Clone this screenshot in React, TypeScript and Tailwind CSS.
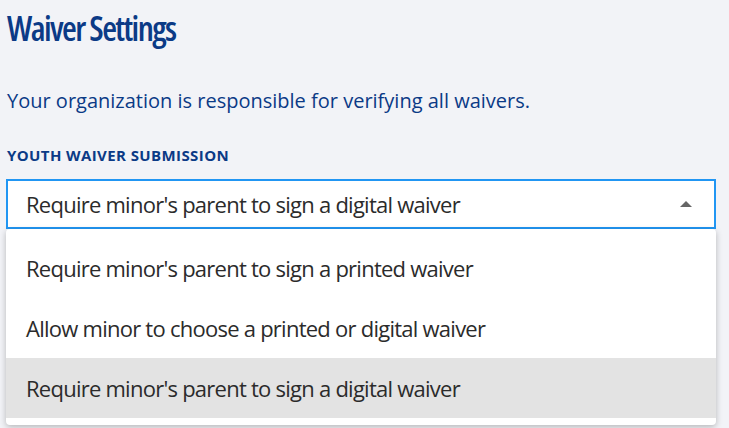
import React from 'react';

const options = [
  "Require minor's parent to sign a printed waiver",
  'Allow minor to choose a printed or digital waiver',
  "Require minor's parent to sign a digital waiver",
];

export default function App() {
  const selected = options[2];

  return (
    <div className="min-h-[428px] w-[729px] bg-[#f2f3f7] pl-[6px] pr-[13px] pt-[7px] font-['Open_Sans',sans-serif] overflow-hidden">
      <h1 className="pl-[1px] text-[34px] leading-[42px] font-semibold tracking-[-1.6px] text-[#0b3a86] [font-stretch:75%]">
        Waiver Settings
      </h1>

      <p className="mt-[39px] pl-[1px] text-[20px] leading-[26px] text-[#0b3a86]">
        Your organization is responsible for verifying all waivers.
      </p>

      <label className="mt-[31px] block pl-[1px] text-[15px] leading-[20px] font-bold tracking-[0.4px] text-[#0b3a86]">
        YOUTH WAIVER SUBMISSION
      </label>

      <div className="relative mt-[14px]">
        <div className="flex h-[50px] items-center justify-between border-2 border-[#2196f3] bg-white pl-[18px] pr-[22px]">
          <span className="text-[22px] tracking-[-0.75px] text-[#2b2b2b]">{selected}</span>
          <span className="h-0 w-0 border-x-[6px] border-b-[6px] border-x-transparent border-b-[#666]" />
        </div>

        <ul className="absolute left-0 right-0 top-[50px] rounded-[4px] bg-white pt-[9px] pb-[7px] shadow-[0_2px_6px_rgba(0,0,0,0.25)]">
          {options.map((o) => (
            <li
              key={o}
              className={`flex h-[60px] items-center pl-[20px] text-[22px] tracking-[-0.75px] text-[#2b2b2b] ${
                o === selected ? 'bg-[#e3e3e3]' : ''
              }`}
            >
              {o}
            </li>
          ))}
        </ul>
      </div>
    </div>
  );
}
